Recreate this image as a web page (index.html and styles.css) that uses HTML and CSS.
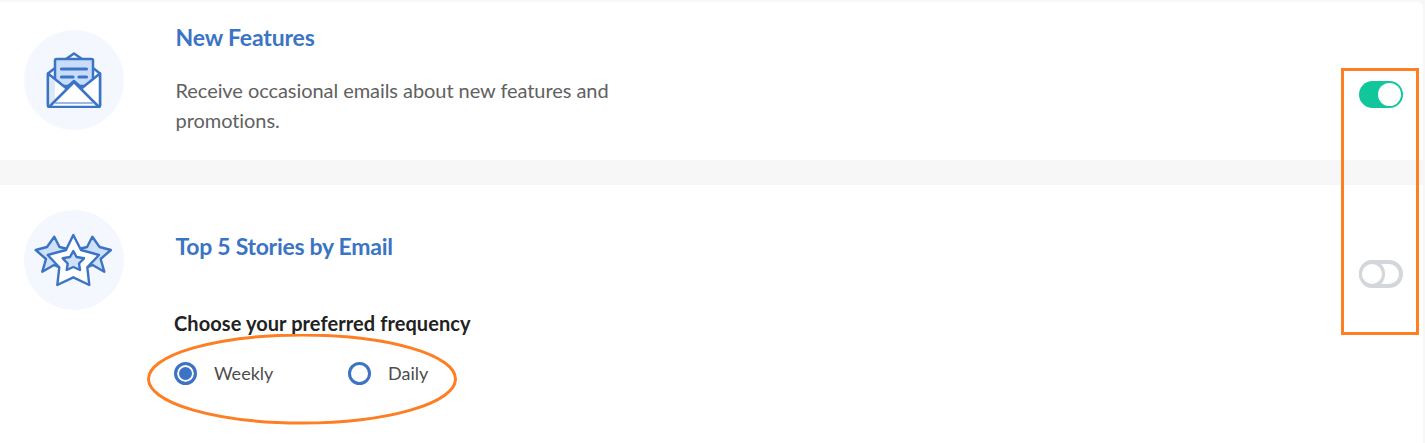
FILE: index.html
```html
<!DOCTYPE html>
<html lang="en">
<head>
<meta charset="utf-8">
<title>Email preferences</title>
<link rel="stylesheet" href="styles.css">
</head>
<body>
<main class="page">
  <section class="card card-features">
    <div class="badge">
      <svg class="icon" viewBox="0 0 56 56" width="56" height="56" fill="none" stroke="#3b74c4" stroke-width="2.5" stroke-linejoin="round" stroke-linecap="round">
        <path d="M9 16L2 21.500V53.500Q2 55 3.500 55H52.500Q54 55 54 53.500V21.500L47 16" fill="#fff"/>
        <path d="M20 7L28 1.500L36 7" fill="#fff"/>
        <path d="M9 34V8.500Q9 7 10.500 7H45.500Q47 7 47 8.500V34Z" fill="#c9dcfb"/>
        <path d="M15.500 17H40.500M15.500 25H27M33 25H40.500" stroke-width="3.200"/>
        <path d="M2 21.500L20 36L28 29L36 36L54 21.500V53.500Q54 55 52.500 55H3.500Q2 55 2 53.500Z" fill="#fff"/>
        <path d="M4 25L9 29.500V49L4 53Z" fill="#dbe8fd" stroke="none"/>
        <path d="M3.500 54.500L28 30L52.500 54.500"/>
        <path d="M9.500 51H46.500" stroke-width="1"/>
      </svg>
    </div>
    <div class="body">
      <h2 class="title">New Features</h2>
      <p class="desc">Receive occasional emails about new features and promotions.</p>
    </div>
    <div class="switch switch-on"><span class="knob"></span></div>
  </section>
  <section class="card card-stories">
    <div class="head">
      <div class="badge">
        <svg class="icon" viewBox="0 0 80 56" width="80" height="56" fill="#cfe0fb" stroke="#3b74c4" stroke-width="2.400" stroke-linejoin="round">
          <path d="M20.300 4.700L25.500 15L38 18L29 28L31 38L20 33L8.300 39.700L12 27L1.700 18L13 15Z"/>
          <path d="M58.300 4.700L53.100 15L40.600 18L49.600 28L47.600 38L58.600 33L70.300 39.700L66.600 27L76.900 18L65.600 15Z"/>
          <path d="M39.300 3L47 18L65 23L53.300 35.300L55.300 53L39.300 45.300L23.300 53L25.300 35.300L13.700 23L32 18Z" fill="#fff"/>
          <path d="M39.300 19L42.600 25L50 26.300L45 31.500L46 38L39.300 35L32.700 38L33.700 31.500L28.700 26.300L36 25Z"/>
        </svg>
      </div>
      <h2 class="title title-stories">Top 5 Stories by Email</h2>
      <div class="switch switch-off"><span class="knob"></span></div>
    </div>
    <h3 class="freq-title">Choose your preferred frequency</h3>
    <div class="radios">
      <label class="radio radio-weekly"><span class="dot dot-on"></span>Weekly</label>
      <label class="radio"><span class="dot"></span>Daily</label>
    </div>
  </section>
</main>
<div class="mark-rect"></div>
<svg class="mark-ellipse" width="312" height="92" viewBox="0 0 312 92"><ellipse cx="155" cy="45" rx="153.500" ry="44" fill="none" stroke="#fd7e23" stroke-width="3"/></svg>
</body>
</html>
```
FILE: styles.css
```css
* { box-sizing: border-box; }
html, body { margin: 0; padding: 0; }
body {
  width: 1425px;
  height: 443px;
  overflow: hidden;
  background: #f7f7f7;
  font-family: "Lato", "Liberation Sans", sans-serif;
  position: relative;
}
.page {
  display: flex;
  flex-direction: column;
  gap: 25px;
  padding-top: 2px;
}
.card {
  background: #fff;
  width: 1423px;
}
.card-features {
  height: 158px;
  display: flex;
  padding: 28px 20px 0 24px;
  border-top-right-radius: 5px;
}
.card-stories {
  height: 258px;
  padding: 25px 20px 0 24px;
}
.head { display: flex; }
.badge {
  width: 100px;
  height: 100px;
  flex: none;
  border-radius: 50%;
  background: #f4f8fe;
  display: flex;
  align-items: center;
  justify-content: center;
}
.body { flex: 1; margin-left: 51.500px; }
.title {
  margin: -6px 0 0;
  font-size: 23px;
  line-height: 26px;
  font-weight: 700;
  color: #3b74c4;
  letter-spacing: -0.15px;
}
.title-stories {
  flex: 1;
  margin: 23px 0 0 51.500px;
  letter-spacing: -0.28px;
}
.desc {
  margin: 25px 0 0;
  width: 460px;
  font-size: 20px;
  line-height: 30px;
  color: #616161;
  letter-spacing: -0.06px;
}
.switch {
  flex: none;
  width: 44px;
  height: 27px;
  border-radius: 14px;
  position: relative;
}
.switch-on { background: #12c69c; margin-top: 51px; }
.switch-off {
  height: 28px;
  border: 4px solid #d3d6da;
  background: #fff;
  margin-top: 50px;
}
.knob {
  position: absolute;
  border-radius: 50%;
  display: block;
}
.switch-on .knob {
  right: 2px;
  top: 2px;
  width: 23px;
  height: 23px;
  background: #fff;
}
.switch-off .knob {
  left: -4px;
  top: -4px;
  width: 26px;
  height: 28px;
  border-style: solid;
  border-color: #d3d6da;
  border-width: 4px 3px;
  background: #fff;
}
.freq-title {
  margin: 0 0 0 150px;
  font-size: 20px;
  line-height: 26px;
  font-weight: 700;
  color: #222;
  letter-spacing: 0.08px;
}
.radios {
  display: flex;
  margin: 24px 0 0 150px;
}
.radio {
  display: flex;
  align-items: center;
  font-size: 18px;
  line-height: 26px;
  color: #4d4d4d;
}
.radio-weekly { width: 174px; }
.dot {
  width: 23px;
  height: 23px;
  border: 3px solid #3b74c4;
  border-radius: 50%;
  margin-right: 17px;
  background: #fff;
}
.dot-on {
  background: #3b74c4;
  box-shadow: inset 0 0 0 2px #fff;
}
.mark-rect {
  position: absolute;
  left: 1341px;
  top: 68px;
  width: 78px;
  height: 267px;
  border: 3px solid #fd7e23;
}
.mark-ellipse {
  position: absolute;
  left: 147px;
  top: 334px;
}
```
